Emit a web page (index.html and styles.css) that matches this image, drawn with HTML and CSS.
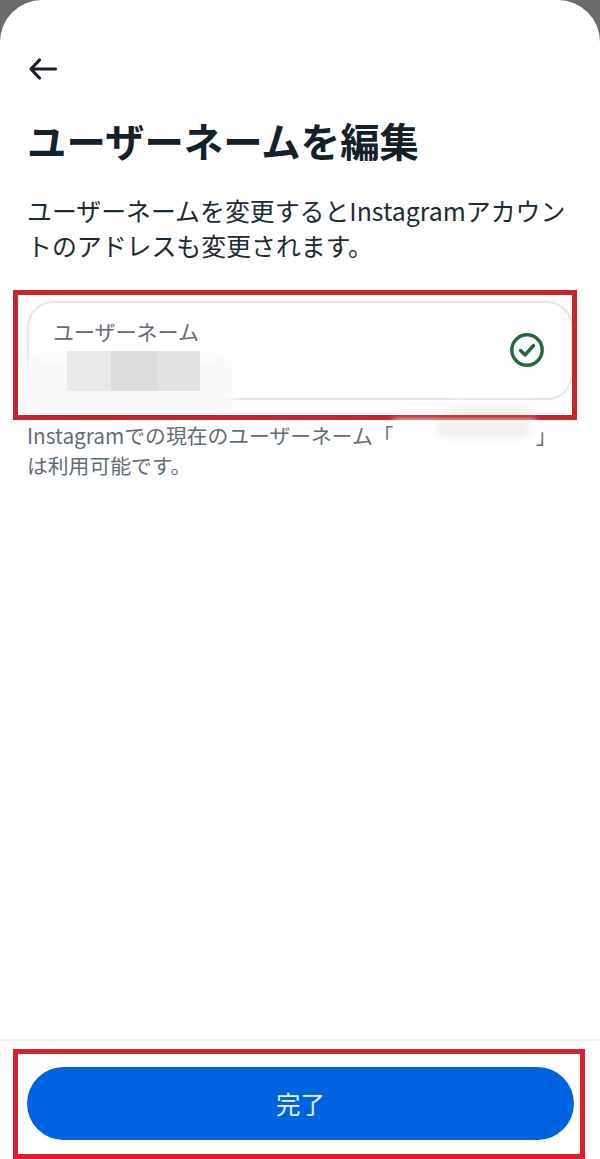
FILE: index.html
```html
<!DOCTYPE html>
<html lang="ja">
<head>
  <meta charset="UTF-8" />
  <meta name="viewport" content="width=device-width, initial-scale=1" />
  <title>ユーザーネームを編集</title>
  <link rel="stylesheet" href="styles.css">
</head>
<body>

<div class="sheet">
  <main class="content">
    <a href="#" class="back-link" aria-label="戻る">
      <svg width="30" height="24" viewBox="0 0 30 24" fill="none" stroke="#14202a" stroke-width="3.2" stroke-linecap="round" stroke-linejoin="round">
        <path d="M27.5 12H3.5"/>
        <path d="M11.5 3L3 12L11.5 21"/>
      </svg>
    </a>

    <h1>ユーザーネームを編集</h1>
    <p class="lead">ユーザーネームを変更するとInstagramアカウントのアドレスも変更されます。</p>

    <div class="highlight field-box">
      <div class="field">
        <div class="field-text">
          <label class="field-label">ユーザーネーム</label>
          <div class="masked-value">
            <span class="patch patch-a"></span>
            <span class="patch patch-b"></span>
            <span class="patch patch-c"></span>
          </div>
        </div>
        <svg class="check" width="36" height="36" viewBox="0 0 36 36" fill="none" stroke="#1f6b3a" stroke-width="3.4" stroke-linecap="round" stroke-linejoin="round">
          <circle cx="18" cy="18" r="15.2"/>
          <path d="M11.5 18.5L16 23L24.5 13.5"/>
        </svg>
      </div>
      <!-- ぼかし -->
      <div class="smudge smudge-left"></div>
      <div class="smudge smudge-right"></div>
    </div>

    <p class="helper">Instagramでの現在のユーザーネーム「<span class="masked-name"></span>」<br>は利用可能です。</p>
  </main>

  <footer class="footer">
    <div class="highlight button-box">
      <a href="#" class="button-link">完了</a>
    </div>
  </footer>
</div>

</body>
</html>
```

FILE: styles.css
```css
* {
  box-sizing: border-box;
}
html, body {
  margin: 0;
  height: 100%;
}
body {
  background-color: #6a6a6a;
  color: #1c2b33;
  font-family: "Noto Sans CJK JP", "Noto Sans", sans-serif;
  overflow: hidden;
}
.sheet {
  height: 1159px;
  background-color: #fff;
  border-radius: 42px 42px 0 0;
  display: flex;
  flex-direction: column;
}
.content {
  flex: 1;
  padding: 57px 0 0 27px;
}
.back-link {
  display: block;
  width: 30px;
  height: 24px;
  margin-left: 1px;
}
.back-link svg {
  display: block;
}
h1 {
  margin: 31px 0 0;
  font-size: 39.4px;
  line-height: 56px;
  font-weight: 700;
  color: #14202a;
}
.lead {
  margin: 25px 20px 0 0;
  font-size: 24.9px;
  line-height: 35px;
}
.highlight {
  border: 5px solid #c5262e;
}
.field-box {
  position: relative;
  width: 564px;
  height: 130px;
  margin: 27px 0 0 -14px;
  padding: 6px 0 0 9px;
  overflow: hidden;
}
.field {
  width: 546px;
  height: 99px;
  border: 2px solid #e4e6e6;
  border-radius: 26px;
  padding: 13px 26px 0 24px;
  display: flex;
  justify-content: space-between;
}
.field-label {
  display: block;
  font-size: 21px;
  line-height: 30px;
  color: #5f6d76;
}
.masked-value {
  display: flex;
  height: 40px;
  margin: 5px 0 0 14px;
  position: relative;
  z-index: 1;
}
.patch {
  display: block;
  height: 40px;
}
.patch-a {
  width: 44px;
  background-color: #e9e9e9;
}
.patch-b {
  width: 46px;
  background-color: #dcdcdd;
}
.patch-c {
  width: 43px;
  background-color: #e2e2e3;
}
.check {
  flex-shrink: 0;
  margin-top: 16px;
}
.smudge {
  position: absolute;
  filter: blur(7px);
}
.smudge-left {
  left: 5px;
  top: 62px;
  width: 210px;
  height: 60px;
  background-color: #f8f8f8;
}
.smudge-right {
  left: 430px;
  top: 110px;
  width: 85px;
  height: 30px;
  background-color: #f2f2f3;
}
.helper {
  margin: 0;
  font-size: 20.8px;
  line-height: 30px;
  color: #5f6d76;
}
.masked-name {
  display: inline-block;
  width: 142px;
  height: 18px;
  vertical-align: top;
  background: linear-gradient(90deg, #fff 28%, #f1f1f2 32%, #f1f1f2 92%, #fff 100%);
  filter: blur(3px);
}
.footer {
  border-top: 2px solid #eeeff0;
  height: 120px;
  padding: 8px 0 0 13px;
}
.button-box {
  width: 572px;
  height: 110px;
  padding: 13px 0 0 9px;
  border-color: #d8232f;
}
.button-link {
  display: flex;
  align-items: center;
  justify-content: center;
  width: 547px;
  height: 73px;
  border-radius: 37px;
  background-color: #0064e0;
  color: #e6f4ff;
  font-size: 24.5px;
  text-decoration: none;
}
```
